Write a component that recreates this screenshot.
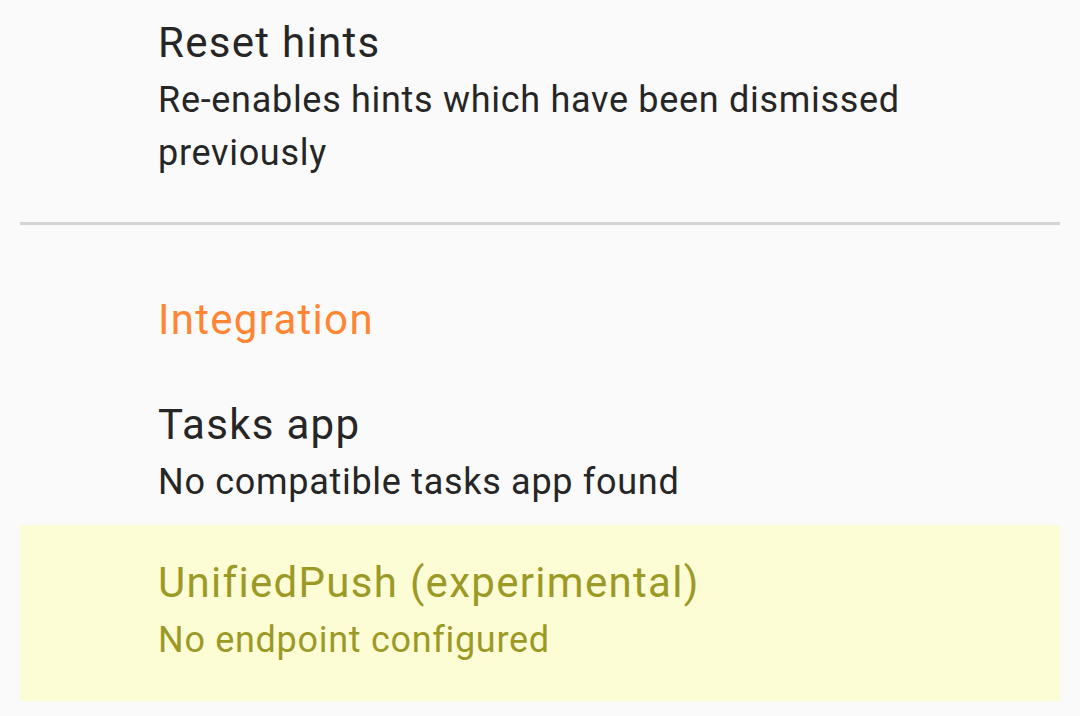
import React from "react";

export default function App() {
  return (
    <div
      className="w-[1080px] h-[716px] overflow-hidden bg-[#fafafa] text-[#262626]"
      style={{ fontFamily: "Roboto, 'Noto Sans', sans-serif" }}
    >
      <div className="pl-[158px] pt-[18px]">
        <div className="text-[42px] leading-[49px] tracking-[1.3px]">Reset hints</div>
        <div className="mt-[7px] text-[36px] leading-[53px] tracking-[0.7px] w-[780px]">
          Re-enables hints which have been dismissed previously
        </div>
      </div>
      <div className="mx-[20px] mt-[42px] h-[3px] bg-[#d4d4d4]" />
      <div className="pl-[158px] mt-[70px] text-[42px] leading-[49px] tracking-[1.3px] text-[#ff8533]">
        Integration
      </div>
      <div className="pl-[158px] mt-[56px]">
        <div className="text-[42px] leading-[49px] tracking-[1.3px]">Tasks app</div>
        <div className="mt-[7px] text-[36px] leading-[53px] tracking-[0.7px]">
          No compatible tasks app found
        </div>
      </div>
      <div className="mx-[20px] mt-[16px] bg-[#fcfcd5] pl-[138px] pt-[33px] pb-[34px] text-[#9c9a27]">
        <div className="text-[42px] leading-[49px] tracking-[1.3px]">UnifiedPush (experimental)</div>
        <div className="mt-[7px] text-[36px] leading-[53px] tracking-[0.7px]">No endpoint configured</div>
      </div>
    </div>
  );
}
